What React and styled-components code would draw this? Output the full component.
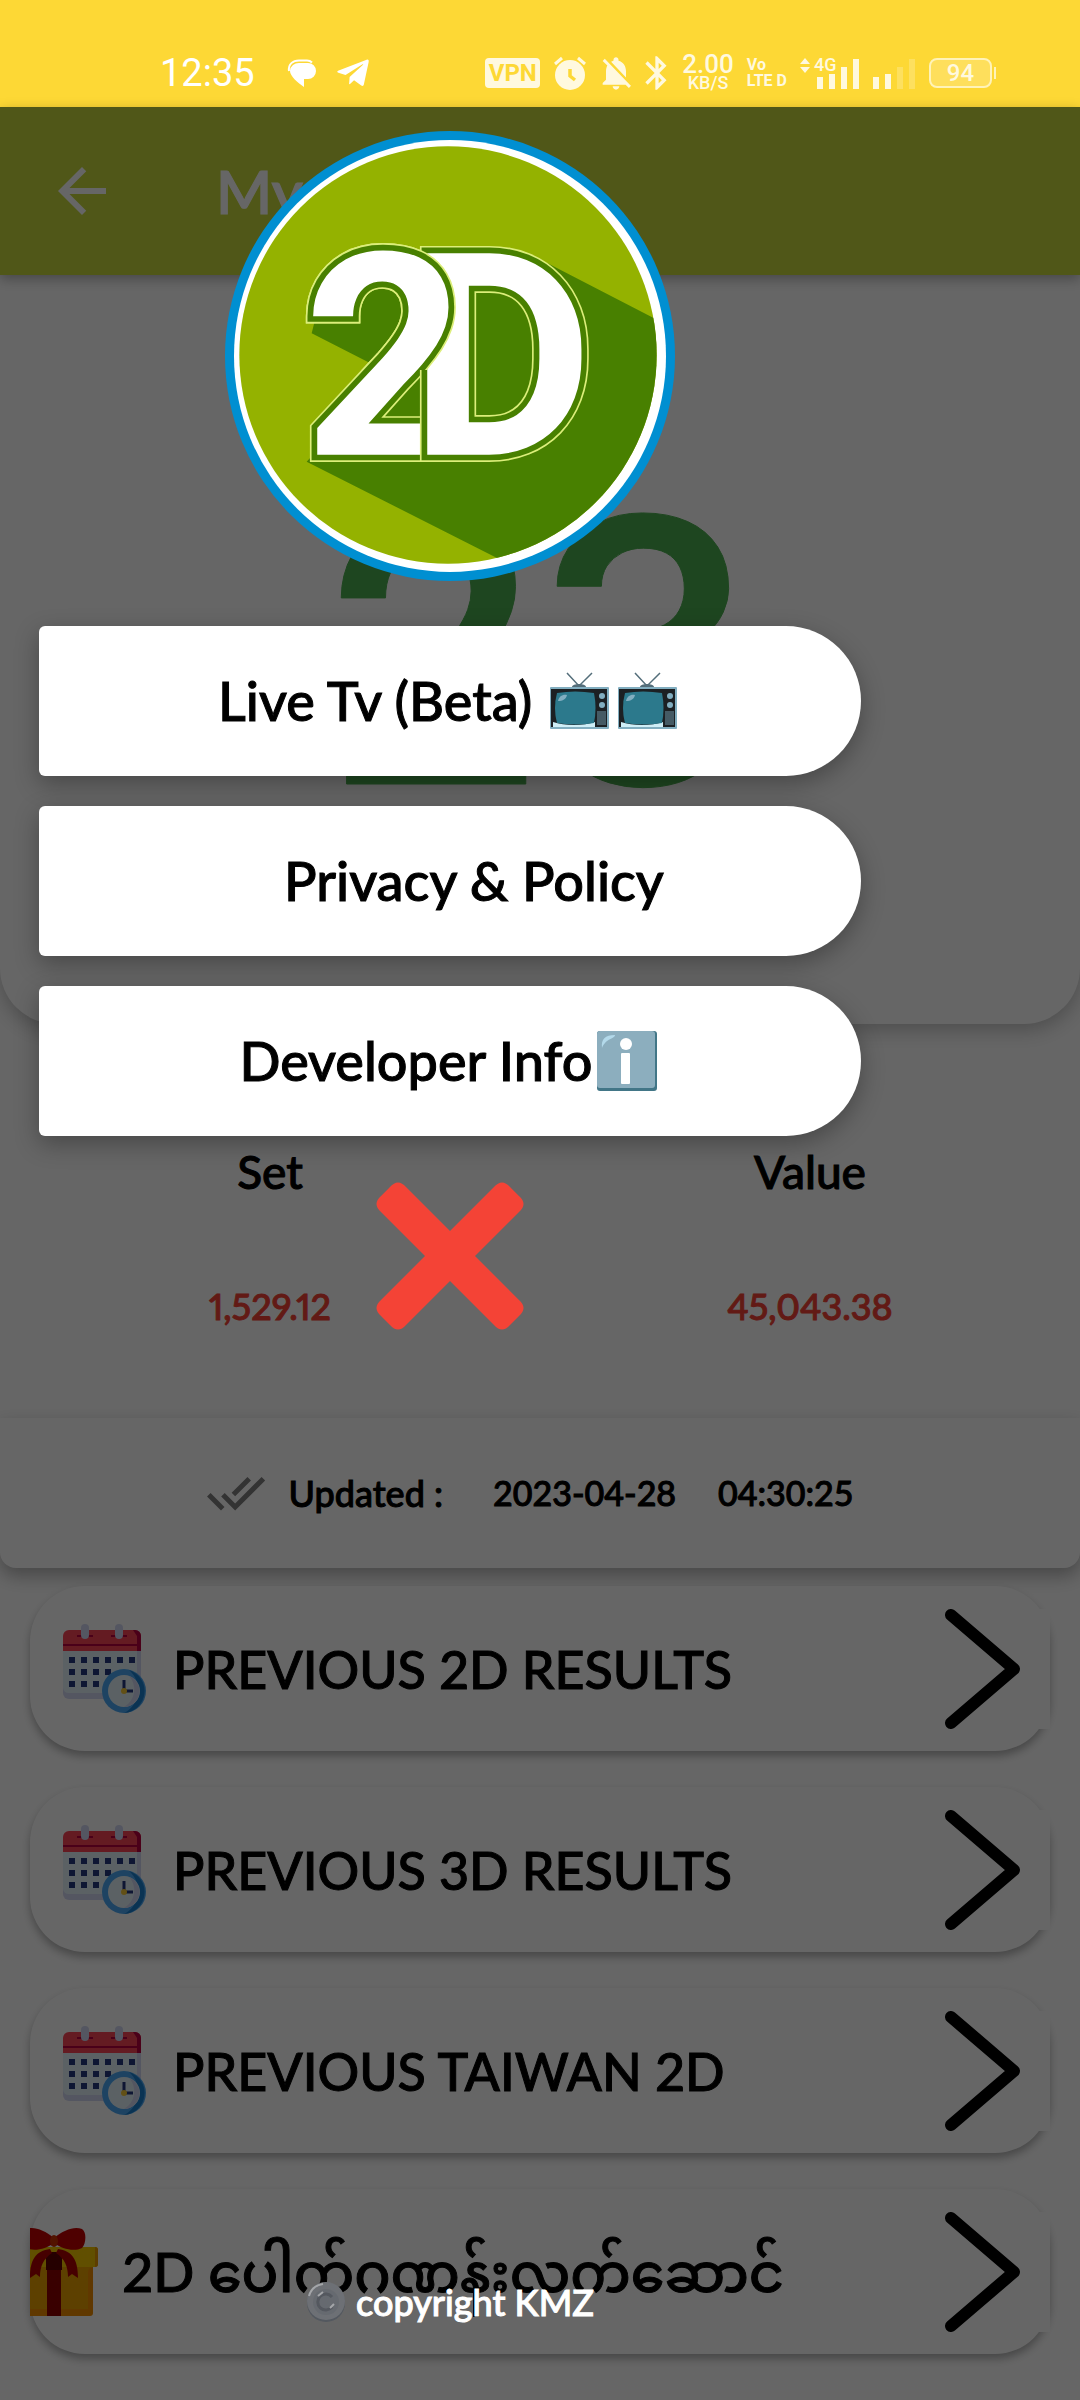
import { useState } from "react";
import styled, { createGlobalStyle } from "styled-components";
import { FaTelegramPlane } from "react-icons/fa";
import {
  MdArrowBack,
  MdBluetooth,
  MdDoneAll,
  MdNotificationsOff,
} from "react-icons/md";

const rows = [
  { id: "2d", title: "PREVIOUS 2D RESULTS", icon: "calendar" },
  { id: "3d", title: "PREVIOUS 3D RESULTS", icon: "calendar" },
  { id: "taiwan", title: "PREVIOUS TAIWAN 2D", icon: "calendar" },
  { id: "gift", title: "2D ပေါက်ဂဏန်းလက်ဆောင်", icon: "gift" },
];

const App = () => {
  const [open, setOpen] = useState(true);

  return (
    <Screen>
      <GlobalStyle />
      <StatusBar />
      <Body>
        <AppBar>
          <BackButton aria-label="Back">
            <MdArrowBack size={72} />
          </BackButton>
          <Title>My</Title>
        </AppBar>
        <ResultCard>
          <BigNumber>23</BigNumber>
        </ResultCard>
        <Market>
          <MarketItem>
            <MarketName>Set</MarketName>
            <MarketValue>1,529.12</MarketValue>
          </MarketItem>
          <MarketItem>
            <MarketName>Value</MarketName>
            <MarketValue>45,043.38</MarketValue>
          </MarketItem>
        </Market>
        <Updated>
          <MdDoneAll size={60} color="#808080" />
          <UpdatedLabel>Updated :</UpdatedLabel>
          <UpdatedDate>2023-04-28</UpdatedDate>
          <UpdatedDate>04:30:25</UpdatedDate>
        </Updated>
        <List>
          {rows.map(row => (
            <Row key={row.id}>
              <RowContent $clip={row.icon === "gift"}>
                {row.icon === "gift" ? <GiftIcon /> : <CalendarIcon />}
                <RowTitle $large={row.icon === "gift"}>{row.title}</RowTitle>
              </RowContent>
              <Chevron />
            </Row>
          ))}
        </List>
        {open && (
          <Overlay>
            <Drawer>
              <Logo />
              <Menu>
                <MenuButton>
                  Live Tv (Beta)&nbsp;
                  <TvIcon />
                  <TvIcon />
                </MenuButton>
                <MenuButton $indent>Privacy &amp; Policy</MenuButton>
                <MenuButton>
                  Developer Info
                  <InfoIcon />
                </MenuButton>
              </Menu>
              <CloseButton aria-label="Close" onClick={() => setOpen(false)}>
                <CloseIcon />
              </CloseButton>
              <Copyright>
                <CopyrightIcon />
                copyright KMZ
              </Copyright>
            </Drawer>
          </Overlay>
        )}
      </Body>
    </Screen>
  );
};

export default App;

const StatusBar = () => (
  <StatusWrap>
    <StatusGroup $gap={32}>
      <Clock>12:35</Clock>
      <StatusGroup $gap={18}>
        <svg width="30" height="30" viewBox="0 0 30 30" fill="#fff">
          <path d="M13 5h8a8 8 0 0 1 0 16h-4v8C11 25 3 18 3 13a9 8 0 0 1 10-8z" />
          <path d="M2 13C1 6 6 2.500 12 2.500h8c2 0 3.500.5 5 2" fill="none" stroke="#fff" strokeWidth="2" />
        </svg>
        <FaTelegramPlane size={36} color="#fff" />
      </StatusGroup>
    </StatusGroup>
    <StatusGroup $gap={13}>
      <Vpn>VPN</Vpn>
      <svg width="34" height="34" viewBox="0 0 34 34">
        <circle cx="17" cy="19" r="15" fill="#fff9df" />
        <path d="M2 8l7-6M32 8l-7-6" stroke="#fff9df" strokeWidth="3" />
        <path d="M17 13v7l5 4" fill="none" stroke="#fdd835" strokeWidth="3.500" />
      </svg>
      <IconSlot $width={32}>
        <MdNotificationsOff size={40} />
      </IconSlot>
      <IconSlot $width={24}>
        <MdBluetooth size={40} />
      </IconSlot>
      <Stack>
        <Speed>2.00</Speed>
        <SpeedUnit>KB/S</SpeedUnit>
      </Stack>
      <Stack $left>
        <Volte>Vo</Volte>
        <Volte>LTE D</Volte>
      </Stack>
      <Signal>
        <Network>4G</Network>
        <svg width="60" height="34" viewBox="0 0 60 34" fill="#fff9df">
          <path d="M0 8l5-6 5 6zM0 11h10l-5 6z" />
          <path d="M17 21h6v12h-6zM29 18h6v15h-6zM41 11h6v22h-6zM53 3h6v30h-6z" />
        </svg>
      </Signal>
      <svg width="43" height="34" viewBox="0 0 43 34" fill="#fff9df">
        <path d="M0 21h6v12H0zM12 18h6v15h-6z" />
        <path d="M24 11h6v22h-6zM36 3h6v30h-6z" opacity="0.25" />
      </svg>
      <BatteryWrap>
        <Battery>94</Battery>
        <BatteryTip />
      </BatteryWrap>
    </StatusGroup>
  </StatusWrap>
);

const CalendarIcon = () => (
  <svg width="84" height="90" viewBox="0 0 84 90">
    <path d="M0 25h78v44a6 6 0 0 1-6 6H6a6 6 0 0 1-6-6z" fill="#d3d7f2" />
    <path d="M0 25h74v44H6a6 6 0 0 1-6-5z" fill="#e4f3fb" />
    <path d="M6 6h66a6 6 0 0 1 6 6v15H0V12a6 6 0 0 1 6-6z" fill="#fb4455" />
    <path d="M70 6h2a6 6 0 0 1 6 6v15h-4V12z" fill="#b8003f" />
    <path d="M0 21h78M14 12h16M48 12h16" stroke="#b8003f" strokeWidth="2" />
    <rect x="18" y="0" width="8" height="15" rx="4" fill="#d3d7f2" />
    <rect x="52" y="0" width="8" height="15" rx="4" fill="#d3d7f2" />
    <g fill="#24387f">
      {[0, 1, 2, 3, 4, 5].map(i => (
        <rect key={i} x={6 + i * 12} y="33" width="6" height="6" />
      ))}
      {[0, 1, 2, 3].map(i => (
        <rect key={i} x={6 + i * 12} y="45" width="6" height="6" />
      ))}
      {[0, 1, 2].map(i => (
        <rect key={i} x={6 + i * 12} y="57" width="6" height="6" />
      ))}
    </g>
    <circle cx="61" cy="67" r="22" fill="#4ba9f5" />
    <path d="M66 46a22 22 0 0 1-5 43 26 26 0 0 0 5-43z" fill="#1a7fd0" />
    <circle cx="61" cy="67" r="16" fill="#e4f3fb" />
    <path d="M66 52a16 16 0 0 1-5 31 20 20 0 0 0 5-31z" fill="#d3d7f2" />
    <path d="M61 56v11h9" fill="none" stroke="#24387f" strokeWidth="3" />
    <circle cx="61" cy="67" r="3" fill="#f5c838" />
  </svg>
);

const GiftIcon = () => (
  <svg width="88" height="90" viewBox="0 0 88 90">
    <path d="M5 38h78v48a3 3 0 0 1-3 3H8a3 3 0 0 1-3-3z" fill="#f08c00" />
    <path d="M5 38h78v2q-5 1-5 6v36H5z" fill="#e8a000" />
    <path d="M3 20h82a3 3 0 0 1 3 3v14a3 3 0 0 1-3 3H3a3 3 0 0 1-3-3V23a3 3 0 0 1 3-3z" fill="#f2c500" />
    <path d="M85 20a3 3 0 0 1 3 3v14a3 3 0 0 1-3 3z" fill="#e89a00" />
    <path d="M37 28h14v61H37z" fill="#8f0000" />
    <path d="M36 25h16v18H36z" fill="#5e0000" />
    <path d="M40 22c-14 2-20 10-20 29l6-4 4 3c0-10 3-18 12-24zM48 22c14 2 20 10 20 29l-6-4-4 3c0-10-3-18-12-24z" fill="#b00000" />
    <path d="M44 11C34 3 24-1 16 2c-5 3-4 15 0 19 8 4 20 1 28-5 8 6 20 9 28 5 4-4 5-16 0-19-8-3-18 1-28 9z" fill="#c40000" />
    <ellipse cx="44" cy="14" rx="4" ry="6" fill="#cc3000" />
  </svg>
);

const Chevron = () => (
  <ChevronBox>
    <svg width="80" height="120" viewBox="0 0 80 120">
      <path
        d="M8 6l63 54L8 114"
        fill="none"
        stroke="#000"
        strokeWidth="12"
        strokeLinecap="round"
        strokeLinejoin="round"
      />
    </svg>
  </ChevronBox>
);

const TvIcon = () => (
  <svg width="68" height="60" viewBox="0 0 68 60">
    <path d="M21 2l12 13L46 2" fill="none" stroke="#546e7a" strokeWidth="1.500" />
    <path d="M26 16c0-4 14-4 14 0z" fill="#546e7a" />
    <rect x="4" y="16" width="59" height="42" rx="1" fill="#82aec0" />
    <rect x="5" y="18" width="56" height="38" fill="#1c2023" />
    <path d="M7 51c12 4 30 4 42 0v5H7z" fill="#cfeef7" />
    <rect x="49" y="18" width="12" height="38" fill="#1c2023" />
    <path d="M11 22q18-3 37 0 3 15 0 30-18 3-37 0-4-15 0-30z" fill="#2c798c" />
    <path d="M12 30c1-5 5-7 9-6-1 4-4 6-9 6z" fill="#82aec0" />
    <circle cx="56" cy="25" r="3" fill="#82aec0" />
    <circle cx="56" cy="34" r="3" fill="#82aec0" />
    <path d="M51 40h9v14h-9z" fill="#455a64" />
  </svg>
);

const InfoIcon = () => (
  <svg width="68" height="60" viewBox="0 0 68 60">
    <rect x="5" y="0" width="60" height="60" rx="3" fill="#427687" />
    <rect x="5" y="0" width="58" height="57" rx="3" fill="#8caebe" />
    <path d="M10 17C9 8 13 4 23 4c0 4-9 3-13 13z" fill="#b3d9ea" />
    <circle cx="34" cy="13" r="6" fill="#fff" />
    <rect x="29" y="22" width="9" height="31" rx="1" fill="#fff" />
  </svg>
);

const CloseIcon = () => (
  <svg width="150" height="150" viewBox="0 0 150 150">
    <path
      d="M75 50L119 6q8-9 16 0l9 9q9 8 0 16l-44 44 44 44q9 8 0 16l-9 9q-8 9-16 0L75 100l-44 44q-8 9-16 0l-9-9q-9-8 0-16l44-44L6 31q-9-8 0-16l9-9q8-9 16 0z"
      fill="#f44336"
    />
  </svg>
);

const CopyrightIcon = () => (
  <svg width="40" height="40" viewBox="0 0 40 40">
    <circle cx="20" cy="21" r="19" fill="#53585f" />
    <circle cx="20" cy="19" r="19" fill="#6d7075" />
    <circle cx="20" cy="20" r="13" fill="#666a70" />
    <path d="M26 15a8 8 0 1 0 0 10" fill="none" stroke="#54585f" strokeWidth="3" />
    <path d="M3 14C5 7 10 3 17 2M12 14l5-4M28 22l-4 4" fill="none" stroke="#a4a6a9" strokeWidth="2" />
  </svg>
);

//outline, gap and face of one logo letter
const LogoLayers = ({ href }) => (
  <>
    <use href={href} fill="none" stroke="#dcee7a" strokeWidth="44" />
    <use href={href} fill="none" stroke="#488000" strokeWidth="34" />
    <use href={href} fill="#fff" />
  </>
);

const Logo = () => (
  <svg width="450" height="450" viewBox="45 33 1350 1350" role="img" aria-label="2D">
    <defs>
      <clipPath id="disc">
        <circle cx="714" cy="705" r="626" />
      </clipPath>
      <clipPath id="bowl">
        <rect x="200" y="300" width="700" height="450" />
      </clipPath>
      <LogoLetter id="two" x="280" y="1004">
        2
      </LogoLetter>
      <LogoLetter id="dee" x="598" y="1004">
        D
      </LogoLetter>
    </defs>
    <circle cx="720" cy="708" r="675" fill="#008fd1" />
    <circle cx="720" cy="708" r="648" fill="#fff" />
    <circle cx="714" cy="705" r="626" fill="#94b200" />
    <path
      d="M305 640L330 540 400 450 600 430 1010 428 1440 650V1440H1110L290 1025 340 970 450 850 540 760z"
      fill="#488000"
      clipPath="url(#disc)"
    />
    <LogoLayers href="#two" />
    <LogoLayers href="#dee" />
    {/* the bowl of the 2 lies over the D, its foot behind it */}
    <g clipPath="url(#bowl)">
      <LogoLayers href="#two" />
    </g>
  </svg>
);

const GlobalStyle = createGlobalStyle`
  * {
    box-sizing: border-box;
  }
  body {
    margin: 0;
    background: #fff;
    color: #000;
    font-family: Lato, "Noto Sans Myanmar", "Noto Sans", sans-serif;
    font-weight: 500;
  }
  button {
    padding: 0;
    border: none;
    background: none;
    color: inherit;
    font: inherit;
    cursor: pointer;
  }
  svg {
    display: block;
    flex: none;
  }
`;

const Screen = styled.div`
  display: flex;
  flex-direction: column;
  min-height: 100vh;
`;

//status bar
const StatusWrap = styled.div`
  display: flex;
  align-items: center;
  justify-content: space-between;
  height: 107px;
  padding: 38px 84px 0 160px;
  background: #fdd835;
  color: #fff9df;
`;

const StatusGroup = styled.div`
  display: flex;
  align-items: center;
  gap: ${props => props.$gap}px;
`;

const IconSlot = styled.span`
  display: flex;
  justify-content: center;
  width: ${props => props.$width}px;
`;

const Clock = styled.span`
  color: #fff;
  font-family: Roboto, sans-serif;
  font-size: 38px;
  line-height: 40px;
  font-weight: 400;
`;

const Vpn = styled.span`
  width: 55px;
  border-radius: 4px;
  background: #fff9df;
  color: #fdd835;
  font-family: Roboto, sans-serif;
  font-size: 24px;
  line-height: 30px;
  font-weight: 700;
  text-align: center;
`;

const Stack = styled.div`
  display: flex;
  flex-direction: column;
  align-items: ${props => (props.$left ? "flex-start" : "center")};
  font-family: Roboto, sans-serif;
`;

const Speed = styled.span`
  font-size: 26px;
  line-height: 20px;
`;

const SpeedUnit = styled.span`
  font-size: 18px;
  line-height: 18px;
`;

const Volte = styled.span`
  font-size: 16px;
  line-height: 16px;
  font-weight: 700;
  white-space: nowrap;
`;

const Signal = styled.div`
  position: relative;
`;

const Network = styled.span`
  position: absolute;
  left: 14px;
  top: 0;
  font-family: Roboto, sans-serif;
  font-size: 18px;
  line-height: 18px;
`;

const BatteryWrap = styled.div`
  display: flex;
  align-items: center;
  gap: 2px;
`;

const Battery = styled.span`
  width: 63px;
  border: 2px solid #fff3b8;
  border-radius: 8px;
  background: #fedf5c;
  font-family: Roboto, sans-serif;
  font-size: 24px;
  line-height: 26px;
  text-align: center;
`;

const BatteryTip = styled.span`
  width: 2px;
  height: 12px;
  background: #fff3b8;
`;

//page under the menu
const Body = styled.main`
  position: relative;
  flex: 1;
  -webkit-text-stroke: 1px currentColor;
`;

const AppBar = styled.header`
  position: relative;
  display: flex;
  align-items: center;
  gap: 98px;
  height: 168px;
  padding: 0 46px;
  background: #c8da3c;
  color: #fff;
  box-shadow: 0 4px 12px rgba(0, 0, 0, 0.3);
`;

const BackButton = styled.button``;

const Title = styled.h1`
  margin: 0;
  font-size: 60px;
  line-height: 72px;
  font-weight: 600;
`;

const ResultCard = styled.section`
  display: flex;
  align-items: center;
  justify-content: center;
  min-height: 749px;
  padding-top: 12px;
  border-radius: 0 0 56px 56px;
  background: #fff;
  box-shadow: 0 6px 20px rgba(0, 0, 0, 0.25);
`;

const BigNumber = styled.strong`
  color: #4caf50;
  font-family: Roboto, sans-serif;
  font-size: 376px;
  line-height: 444px;
  font-weight: 500;
`;

const Market = styled.section`
  display: grid;
  grid-template-columns: 1fr 1fr;
  padding: 120px 0 90px;
`;

const MarketItem = styled.div`
  display: flex;
  flex-direction: column;
  align-items: center;
  gap: 84px;
`;

const MarketName = styled.span`
  font-size: 46px;
  line-height: 56px;
`;

const MarketValue = styled.span`
  color: #f44336;
  font-size: 36px;
  line-height: 44px;
  font-variant-numeric: proportional-nums;
`;

const Updated = styled.section`
  display: flex;
  align-items: center;
  justify-content: center;
  min-height: 150px;
  padding-right: 20px;
  border-radius: 0 0 16px 16px;
  background: #fff;
  box-shadow: 0 8px 18px rgba(0, 0, 0, 0.3);
`;

const UpdatedLabel = styled.span`
  margin: 0 8px 0 22px;
  font-size: 36px;
  line-height: 44px;
`;

const UpdatedDate = styled.time`
  margin-left: 42px;
  font-size: 34px;
  line-height: 44px;
`;

const List = styled.section`
  display: flex;
  flex-direction: column;
  gap: 36px;
  padding: 18px 30px 46px;
`;

const Row = styled.button`
  display: flex;
  align-items: center;
  justify-content: space-between;
  height: 165px;
  border-radius: 55px;
  background: #fff;
  box-shadow: 0 5px 8px rgba(0, 0, 0, 0.3);
`;

const RowContent = styled.span`
  display: flex;
  align-items: center;
  gap: ${props => (props.$clip ? 24 : 26)}px;
  padding-left: ${props => (props.$clip ? 0 : 33)}px;
  overflow: hidden;

  svg {
    margin-left: ${props => (props.$clip ? -20 : 0)}px;
  }
`;

const RowTitle = styled.span`
  font-size: ${props => (props.$large ? 54 : 52)}px;
  line-height: 90px;
  white-space: nowrap;
`;

const ChevronBox = styled.span`
  display: flex;
  justify-content: center;
  width: 134px;
  background: #fff;
`;

//menu over the page
const Overlay = styled.div`
  position: absolute;
  inset: 0;
  background: rgba(0, 0, 0, 0.6);
`;

const Drawer = styled.aside`
  display: flex;
  flex-direction: column;
  align-items: center;
  gap: 45px;
  width: 83.33%;
  height: 100%;
  padding: 24px 39px 76px;
`;

const LogoLetter = styled.text`
  font-family: Roboto, sans-serif;
  font-size: 850px;
  font-weight: 700;
`;

const Menu = styled.nav`
  display: flex;
  flex-direction: column;
  gap: 30px;
  width: 100%;
`;

const MenuButton = styled.button`
  display: flex;
  align-items: center;
  justify-content: center;
  height: 150px;
  padding-left: ${props => (props.$indent ? 48 : 0)}px;
  border-radius: 6px 75px 75px 6px;
  background: #fff;
  box-shadow: 0 8px 24px rgba(0, 0, 0, 0.3);
  font-size: 54px;
  line-height: 66px;
`;

const CloseButton = styled.button``;

const Copyright = styled.footer`
  display: flex;
  align-items: center;
  gap: 10px;
  margin-top: auto;
  color: #fff;
  font-size: 36px;
  line-height: 44px;
`;
